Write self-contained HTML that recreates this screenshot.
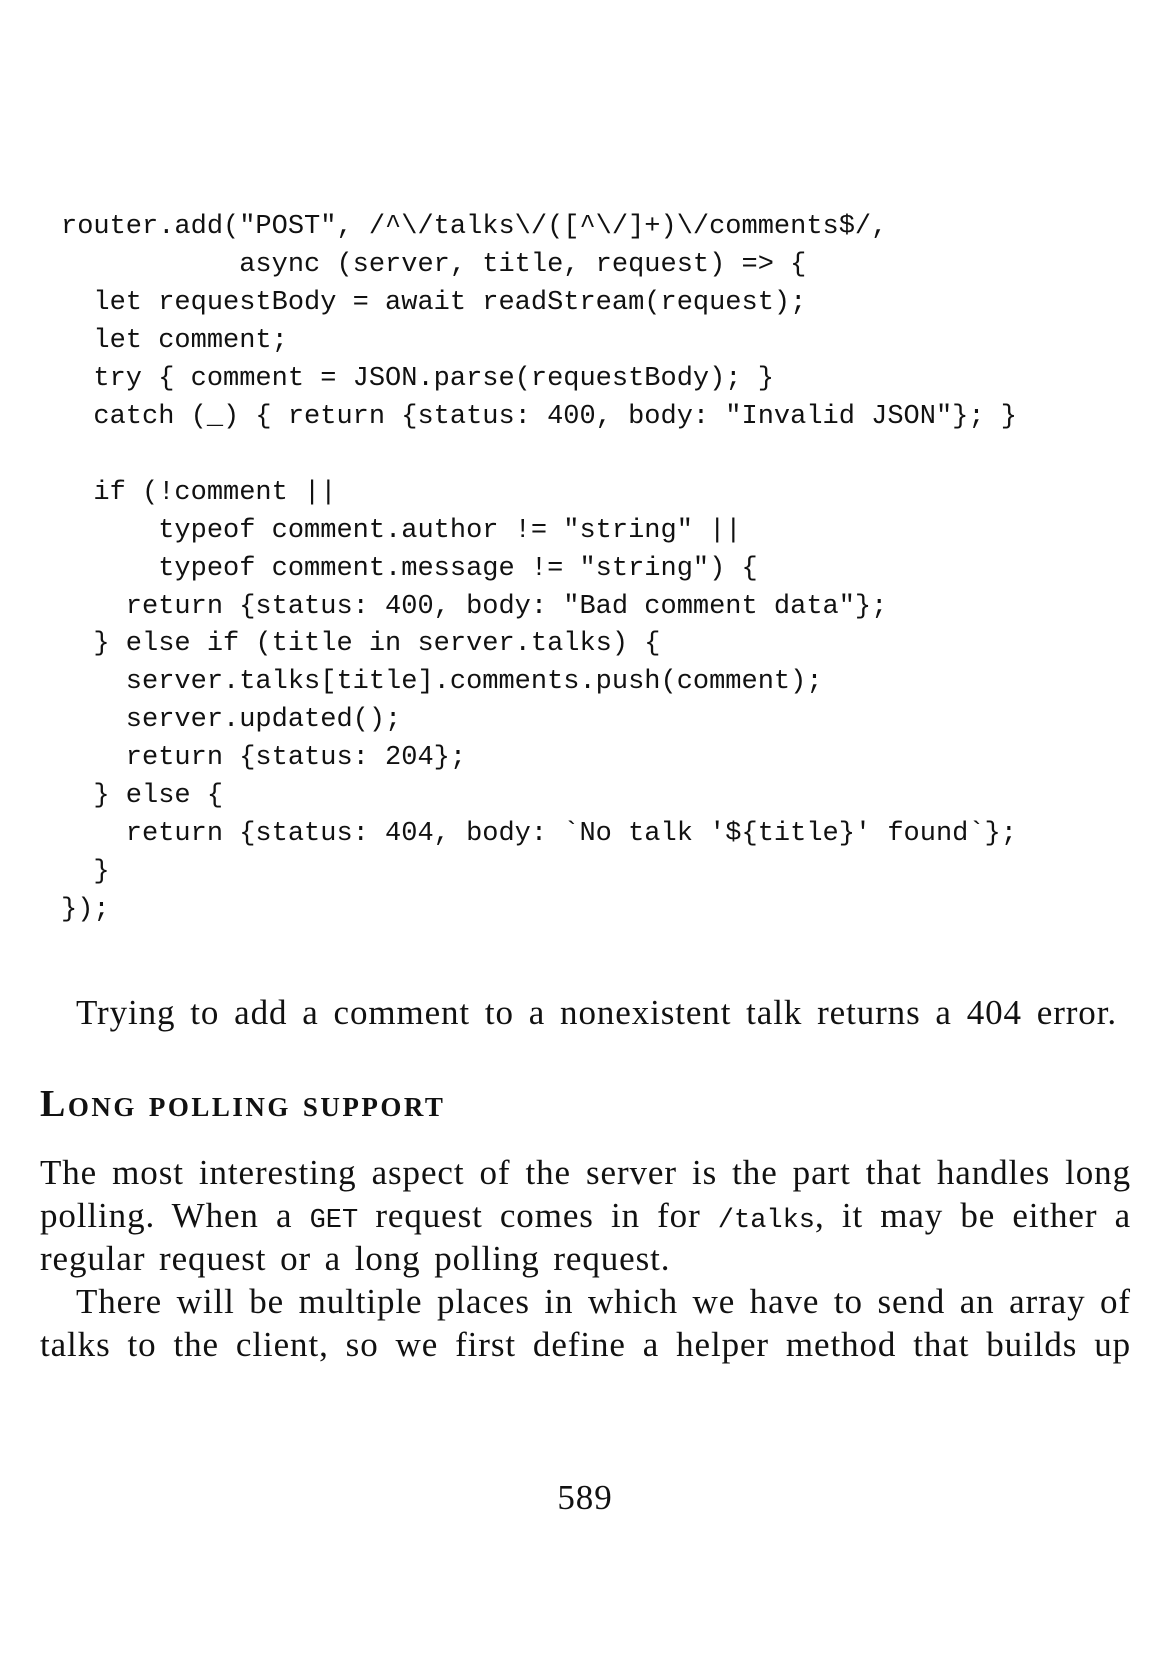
<!DOCTYPE html>
<html><head><meta charset="utf-8"><style>
body{margin:0;background:#fff;width:1165px;height:1654px;position:relative;overflow:hidden;color:#111}
pre{position:absolute;left:61px;top:209px;margin:0;font-family:"Liberation Mono",monospace;font-size:27px;line-height:37.95px}
.s{font-family:"Liberation Serif",serif;font-size:35px;letter-spacing:0.9px;word-spacing:4px;white-space:nowrap}
.l{position:absolute;left:40px;width:1091px;line-height:43px;text-align:justify;text-align-last:justify}
code{font-family:"Liberation Mono",monospace;font-size:27px;letter-spacing:0}
h3{position:absolute;left:40px;top:1082px;margin:0;font-family:"Liberation Serif",serif;font-weight:bold;font-size:38px;font-variant:small-caps;letter-spacing:2.5px;white-space:nowrap}
</style></head><body>
<pre>router.add("POST", /^\/talks\/([^\/]+)\/comments$/,
           async (server, title, request) => {
  let requestBody = await readStream(request);
  let comment;
  try { comment = JSON.parse(requestBody); }
  catch (_) { return {status: 400, body: "Invalid JSON"}; }

  if (!comment ||
      typeof comment.author != "string" ||
      typeof comment.message != "string") {
    return {status: 400, body: "Bad comment data"};
  } else if (title in server.talks) {
    server.talks[title].comments.push(comment);
    server.updated();
    return {status: 204};
  } else {
    return {status: 404, body: `No talk '${title}' found`};
  }
});</pre>
<div class="s" style="position:absolute;left:76px;top:993px;width:1041px;text-align:justify;text-align-last:justify">Trying to add a comment to a nonexistent talk returns a 404 error.</div>
<h3>Long polling support</h3>
<div class="s l" style="top:1151px;">The most interesting aspect of the server is the part that handles long</div>
<div class="s l" style="top:1194px;">polling. When a <code>GET</code> request comes in for <code>/talks</code>, it may be either a</div>
<div class="s l" style="top:1237px;width:auto;text-align:left;text-align-last:left">regular request or a long polling request.</div>
<div class="s l" style="top:1280px;left:76px;width:1055px">There will be multiple places in which we have to send an array of</div>
<div class="s l" style="top:1323px;">talks to the client, so we first define a helper method that builds up</div>
<div class="s" style="position:absolute;left:0;width:1170px;text-align:center;top:1478px;">589</div>
</body></html>
